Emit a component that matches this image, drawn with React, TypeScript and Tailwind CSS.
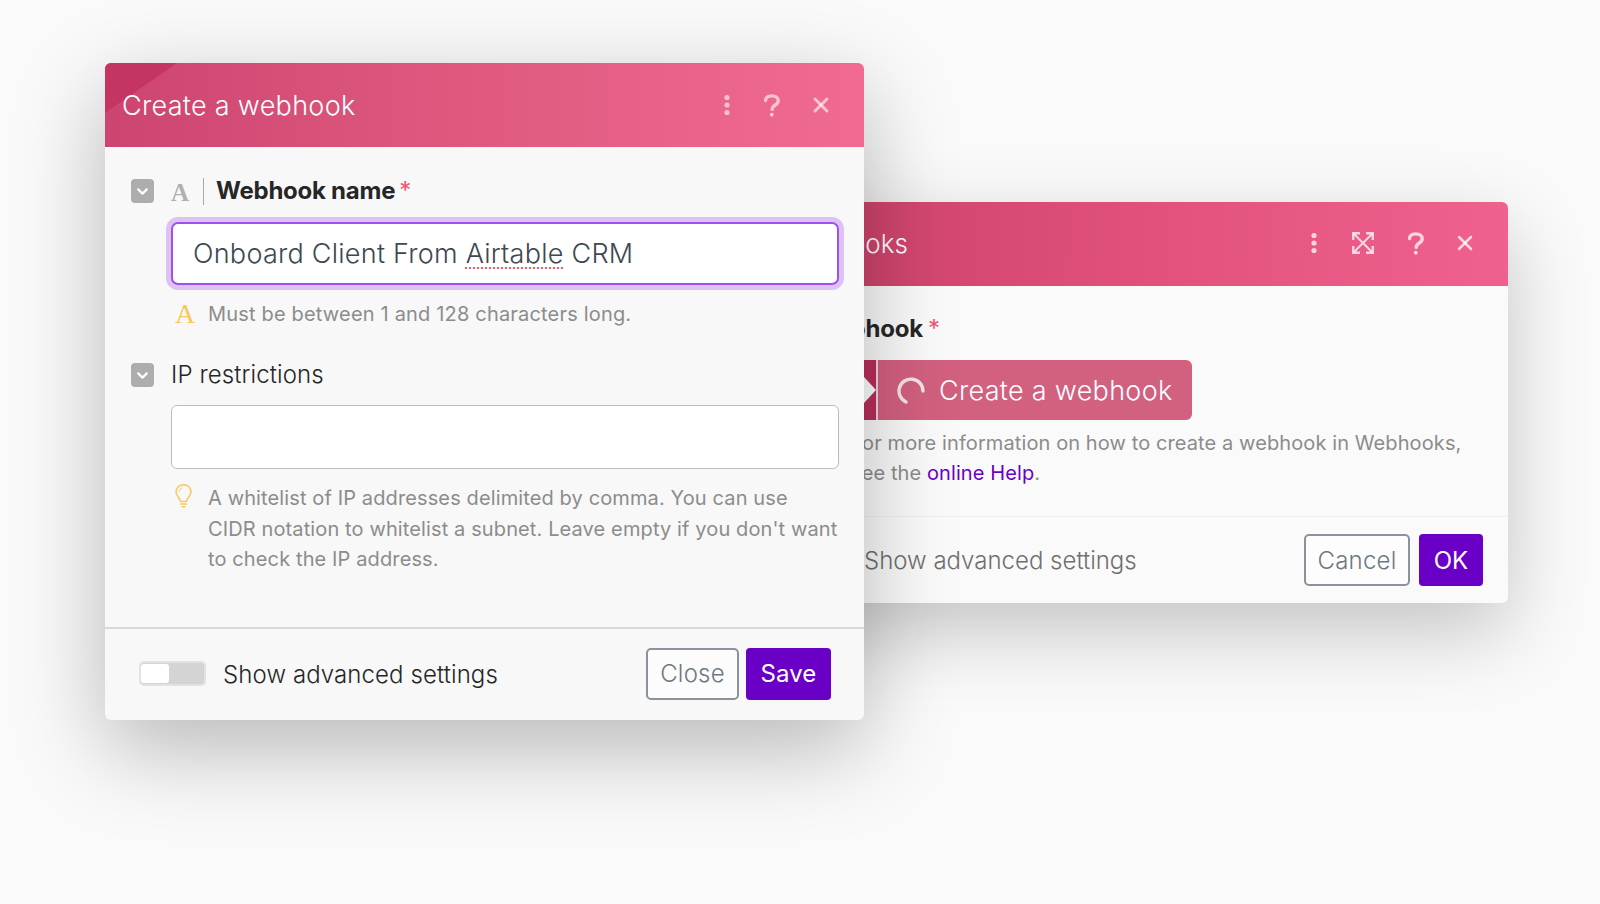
import { ChevronDown, X } from "lucide-react";
import type { ReactNode } from "react";

const font = { fontFamily: "Inter, 'Liberation Sans', sans-serif" };

const Dots = () => (
  <svg width="8" height="22" viewBox="0 0 8 22" fill="currentColor">
    <circle cx="4" cy="3.5" r="2.6" />
    <circle cx="4" cy="11" r="2.6" />
    <circle cx="4" cy="18.5" r="2.6" />
  </svg>
);

const Question = () => (
  <svg width="18" height="23" viewBox="0 0 18 23" fill="none" stroke="currentColor" strokeWidth="3.4" strokeLinecap="round">
    <path d="M2.500 6.500C2.800 3.400 5.300 1.900 8.800 1.900c3.700 0 6.400 1.900 6.400 4.800 0 2.300-1.300 3.400-3.200 4.600-1.800 1.100-2.800 2-2.800 4.100" />
    <circle cx="8.800" cy="20.700" r="1.100" fill="currentColor" strokeWidth="1.500" />
  </svg>
);

const ExpandIcon = () => (
  <svg width="22" height="22" viewBox="0 0 22 22" fill="none" stroke="currentColor" strokeWidth="2.400">
    <path d="M1.200 8V1.200H8M14 1.200h6.800V8M20.800 14v6.800H14M8 20.800H1.200V14" />
    <path d="M2 2l18 18M20 2L2 20" strokeWidth="2" />
  </svg>
);

const Bulb = () => (
  <svg width="17" height="24" viewBox="0 0 17 24" fill="none" stroke="#fbc65c" strokeWidth="1.500" strokeLinecap="round" strokeLinejoin="round">
    <path d="M5.500 17.500C5 14 1 11.500 1 8c0-4.200 3.300-7.200 7.500-7.200S16 3.800 16 8c0 3.500-4 6-4.500 9.500z" />
    <path d="M5.500 20h6M7 22.800h3" />
    <path d="M4.200 7.500c.2-1.800 1.200-3 2.800-3.500" strokeWidth="1" />
  </svg>
);

const Collapse = () => (
  <span className="flex h-[24px] w-[23px] shrink-0 items-center justify-center rounded-[4px] bg-[#adadad] text-white">
    <ChevronDown size={17} strokeWidth={3} />
  </span>
);

const Footer = ({ children }: { children: ReactNode }) => (
  <div className="flex items-center gap-[7px]">{children}</div>
);

const CloseButton = ({ label, width }: { label: string; width: string }) => (
  <button className={`h-[52px] rounded-[5px] border-2 border-[#8a939b] bg-white/50 pt-px text-[24px] font-light tracking-[0.2px] text-[#6d7882] ${width}`}>{label}</button>
);

const SaveButton = ({ label, width }: { label: string; width: string }) => (
  <button className={`h-[52px] rounded-[4px] bg-[#6a00c6] pt-px text-[24px] tracking-[0.1px] text-white ${width}`}>{label}</button>
);

const FrontDialog = () => (
  <section className="absolute left-[105px] top-[63px] z-10 flex h-[657px] w-[759px] flex-col overflow-hidden rounded-[6px] bg-[#f8f8f8] shadow-[0_28px_90px_rgba(0,0,0,0.27)]">
    <header className="relative flex h-[84px] shrink-0 items-center bg-gradient-to-r from-[#cc4570] via-[#e05a80] to-[#f06a92] pl-[17px] pr-[31px] text-white">
      <span className="absolute left-0 top-0 h-0 w-0 border-r-[72px] border-t-[50px] border-r-transparent border-t-[#c53561]" />
      <h1 className="relative flex-1 pt-[2px] text-[27px] font-light tracking-[0.3px]">Create a webhook</h1>
      <div className="flex items-center text-white/60">
        <Dots />
        <span className="ml-[32px]"><Question /></span>
        <X className="ml-[28px]" size={24} strokeWidth={3} />
      </div>
    </header>
    <div className="flex-1 pl-[26px] pr-[25px] pt-[29px]">
      <div className="flex h-[30px] items-center">
        <Collapse />
        <span className="ml-[17px] w-[22px] pt-[2px] text-[25px] font-bold leading-none text-[#b0b0b0]" style={{ fontFamily: "'Liberation Serif', serif" }}>A</span>
        <span className="ml-[10px] h-[27px] w-px bg-[#aaaaaa]" />
        <span className="ml-[12px] text-[24px] font-bold tracking-[-0.25px] text-[#262626]">Webhook name</span>
        <span className="ml-[4px] text-[24px] text-[#f2546f]">*</span>
      </div>
      <div className="ml-[40px] mt-[16px] flex h-[63px] w-[668px] items-center rounded-[7px] border-2 border-[#a24ff2] bg-white pl-[20px] pt-[2px] text-[27px] font-light tracking-[0.25px] text-[#3d4852] shadow-[0_0_0_5px_#dcc3f2]">
        <span>Onboard Client From <span className="underline decoration-[#ef5a66] decoration-dotted decoration-2 underline-offset-4">Airtable</span> CRM</span>
      </div>
      <div className="ml-[44px] mt-[14px] flex h-[30px] items-center text-[20px] tracking-[0.18px] text-[#8c8c8c]">
        <span className="w-[33px] text-[28px] leading-none text-[#fbc65c]" style={{ fontFamily: "'Liberation Serif', serif" }}>A</span>
        <span>Must be between 1 and 128 characters long.</span>
      </div>
      <div className="mt-[31px] flex h-[30px] items-center">
        <Collapse />
        <span className="ml-[17px] text-[24px] font-light tracking-[0.1px] text-[#262626]">IP restrictions</span>
      </div>
      <div className="ml-[40px] mt-[15px] h-[64px] w-[668px] rounded-[6px] border border-[#bcbcbc] bg-white" />
      <div className="ml-[44px] mt-[15px] flex text-[20px] leading-[30.500px] tracking-[0.12px] text-[#8c8c8c]">
        <span className="w-[33px] shrink-0"><Bulb /></span>
        <p className="-mt-px whitespace-nowrap">A whitelist of IP addresses delimited by comma. You can use<br />CIDR notation to whitelist a subnet. Leave empty if you don't want<br />to check the IP address.</p>
      </div>
    </div>
    <footer className="flex h-[93px] shrink-0 items-center justify-between border-t-2 border-[#d8d8d8] pb-[2px] pl-[34px] pr-[33px]">
      <div className="flex items-center">
        <span className="flex h-[25px] w-[67px] items-center rounded-[5px] border-2 border-[#e2e2e2] bg-[#d4d4d4]">
          <span className="h-[19px] w-[28px] rounded-[3px] bg-white" />
        </span>
        <span className="ml-[17px] pt-[3px] text-[24px] font-light tracking-[0.1px] text-[#262626]">Show advanced settings</span>
      </div>
      <Footer>
        <CloseButton label="Close" width="w-[93px]" />
        <SaveButton label="Save" width="w-[85px]" />
      </Footer>
    </footer>
  </section>
);

const BackDialog = () => (
  <section className="absolute left-[760px] top-[202px] flex h-[401px] w-[748px] flex-col overflow-hidden rounded-[6px] bg-[#fafafa] shadow-[0_28px_80px_rgba(0,0,0,0.22)]">
    <header className="flex h-[84px] shrink-0 items-center bg-gradient-to-r from-[#c93f68] via-[#e0507b] to-[#f0628e] pb-[2px] pl-[20px] pr-[31px] text-white">
      <h2 className="flex-1 text-[26px] font-light">Webhooks</h2>
      <div className="flex items-center text-white/75">
        <Dots />
        <span className="ml-[34px]"><ExpandIcon /></span>
        <span className="ml-[33px]"><Question /></span>
        <X className="ml-[28px]" size={24} strokeWidth={2.500} />
      </div>
    </header>
    <div className="flex-1 pl-[91px] pt-[28px]">
      <div className="-ml-[38px] flex h-[30px] items-center">
        <span className="text-[24px] font-bold tracking-[-0.2px] text-[#262626]">Webhook</span>
        <span className="ml-[5px] text-[24px] text-[#f2546f]">*</span>
      </div>
      <div className="mt-[16px] flex h-[60px] w-[341px] overflow-hidden rounded-[6px] bg-[#d2607f] text-white">
        <div className="flex w-[25px] shrink-0 items-center justify-end bg-[#b92f5a]">
          <span className="h-0 w-0 border-y-[13px] border-l-[12px] border-y-transparent border-l-white" />
        </div>
        <div className="flex flex-1 items-center border-l-2 border-[#f0d5dd] pl-[19px] pt-[2px]">
          <svg width="28" height="28" viewBox="0 0 28 28" fill="none" stroke="#f4e3e8" strokeWidth="3.4" strokeLinecap="round">
            <path d="M9 25A12 12 0 1 1 26 14" />
          </svg>
          <span className="ml-[14px] text-[27px] font-light tracking-[0.3px]">Create a webhook</span>
        </div>
      </div>
      <p className="mt-[8px] whitespace-nowrap text-[20px] leading-[30px] tracking-[0.1px] text-[#8c8c8c]">
        For more information on how to create a webhook in Webhooks,<br />see the <span className="text-[#6a00c6]">online Help</span>.
      </p>
    </div>
    <footer className="flex h-[87px] shrink-0 items-center justify-between border-t border-[#efefef] pl-[104px] pr-[25px]">
      <span className="pt-px text-[24px] font-light text-[#6f6f6f]">Show advanced settings</span>
      <Footer>
        <CloseButton label="Cancel" width="w-[106px]" />
        <SaveButton label="OK" width="w-[64px] ml-[2px]" />
      </Footer>
    </footer>
  </section>
);

export default function App() {
  return (
    <div className="relative h-[904px] w-full overflow-hidden bg-[#fafafa]" style={font}>
      <BackDialog />
      <FrontDialog />
    </div>
  );
}
